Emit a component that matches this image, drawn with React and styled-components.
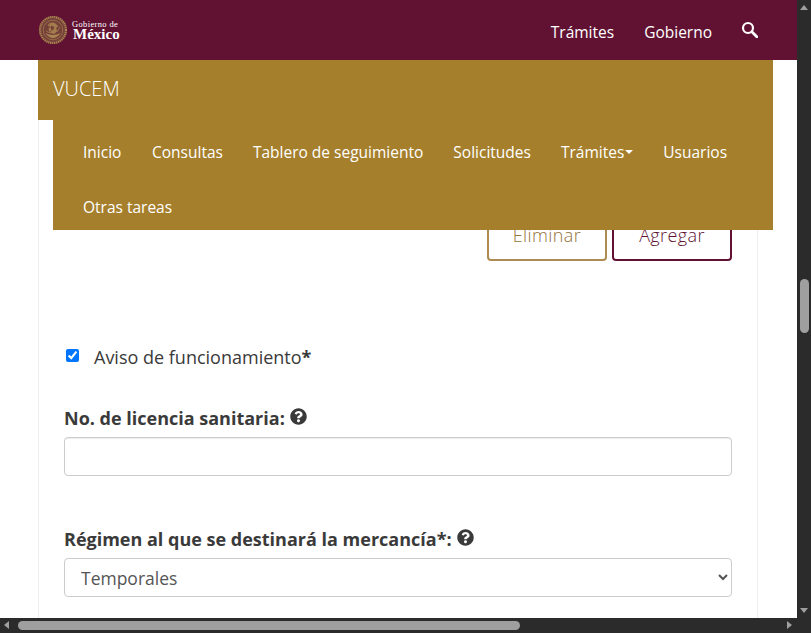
import React from "react";
import styled, { createGlobalStyle } from "styled-components";
import { FaQuestionCircle } from "react-icons/fa";

const GlobalStyle = createGlobalStyle`
  html, body {
    margin: 0;
    height: 100%;
    overflow: hidden;
    background: #fff;
  }
  * { box-sizing: border-box; }
`;

const Frame = styled.div`
  width: 811px;
  height: 633px;
  display: grid;
  grid-template-columns: 797px 14px;
  grid-template-rows: 618px 15px;
  font-family: "Open Sans", sans-serif;
  color: #3a3a3a;
`;

const Viewport = styled.div`
  position: relative;
  overflow: hidden;
  background: #fff;
`;

const TopBar = styled.header`
  height: 60px;
  background: #611232;
  display: flex;
  align-items: center;
  justify-content: space-between;
  padding: 0 38px;
`;

const Logo = styled.div`
  display: flex;
  align-items: center;
  gap: 4px;
  color: #fff;
  font-family: "Liberation Serif", serif;
`;

const LogoText = styled.div`
  display: flex;
  flex-direction: column;
  margin-top: -1px;
`;

const LogoSmall = styled.span`
  font-size: 8.5px;
  line-height: 9px;
  letter-spacing: 0.35px;
`;

const LogoBig = styled.span`
  font-size: 15px;
  line-height: 11px;
  font-weight: 700;
  padding-left: 1px;
`;

const TopLinks = styled.nav`
  display: flex;
  align-items: center;
  gap: 30px;
  padding: 4px 1px 0 0;
`;

const TopLink = styled.a`
  font-size: 15.5px;
  color: #fff;
`;

const SearchIcon = styled.svg`
  width: 17px;
  height: 17px;
  margin: 0 0 5px -1px;
`;

const MenuOverlay = styled.div`
  position: absolute;
  top: 60px;
  left: 38px;
  width: 735px;
  color: #fff;
`;

const Brand = styled.div`
  height: 60px;
  background: #a57f2c;
  padding: 0 15px 3px;
  display: flex;
  align-items: center;
  font-size: 20px;
  font-weight: 300;
`;

const MenuList = styled.ul`
  list-style: none;
  margin: 0 0 0 15px;
  padding: 4px 30px 0;
  height: 110px;
  background: #a57f2c;
  display: flex;
  flex-wrap: wrap;
  align-content: flex-start;
  column-gap: 30px;
`;

const MenuItem = styled.li`
  height: 55px;
  min-width: 39px;
  display: flex;
  align-items: center;
  font-size: 15.5px;
`;

const Caret = styled.span`
  display: inline-block;
  margin-left: 1px;
  border-top: 4px solid #fff;
  border-left: 4px solid transparent;
  border-right: 4px solid transparent;
`;

const Panel = styled.main`
  margin: 0 39px 0 38px;
  padding: 151px 25px 0;
  border-left: 1px solid #eee;
  border-right: 1px solid #eee;
  height: 558px;
`;

const ButtonRow = styled.div`
  display: flex;
  justify-content: flex-end;
  gap: 5px;
  margin-bottom: 83px;
`;

const ActionButton = styled.button`
  width: 120px;
  height: 50px;
  padding: 0 0 2px;
  background: #fff;
  border: 2px solid ${(p) => (p.$primary ? "#611232" : "#ae8b52")};
  border-radius: 4px;
  font-family: "Open Sans", sans-serif;
  font-weight: 300;
  font-size: 18px;
  letter-spacing: 0.4px;
  color: ${(p) => (p.$primary ? "#611232" : "#94733a")};
`;

const CheckRow = styled.label`
  display: flex;
  align-items: center;
  height: 26px;
  font-size: 18px;
  margin-bottom: 35px;
`;

const Check = styled.input`
  width: 13px;
  height: 13px;
  margin: 0 15px 4px 2px;
  accent-color: #0075ff;
`;

const Required = styled.b`
  font-weight: 700;
`;

const FieldLabel = styled.div`
  display: flex;
  align-items: center;
  gap: 5px;
  height: 24px;
  padding-top: 2px;
  font-size: 18px;
  font-weight: 700;
  margin-bottom: 8px;
  svg {
    width: 17px;
    height: 17px;
    margin-bottom: 4px;
  }
`;

const TextField = styled.input`
  display: block;
  width: 100%;
  height: 39px;
  border: 1px solid #ccc;
  border-radius: 4px;
  box-shadow: inset 0 1px 1px rgba(0, 0, 0, 0.075);
  margin-bottom: 50px;
`;

const SelectField = styled.select`
  display: block;
  width: 100%;
  height: 39px;
  background: #fff;
  border: 1px solid #ccc;
  border-radius: 4px;
  padding: 0 0 0 12px;
  font-family: "Open Sans", sans-serif;
  font-size: 17.5px;
  color: #555;
  margin-bottom: 15px;
`;

const ScrollTrack = styled.div`
  position: relative;
  background: #2b2b2b;
`;

const Arrow = styled.span`
  position: absolute;
  width: 0;
  height: 0;
  ${(p) => p.$pos}
`;

const ThumbV = styled.div`
  position: absolute;
  left: 3px;
  top: 279px;
  width: 9px;
  height: 54px;
  border-radius: 5px;
  background: #9f9f9f;
`;

const ThumbH = styled.div`
  position: absolute;
  left: 18px;
  top: 3px;
  width: 502px;
  height: 9px;
  border-radius: 5px;
  background: #9f9f9f;
`;

function Emblem() {
  return (
    <svg width="30" height="30" viewBox="0 0 30 30">
      <circle cx="15" cy="15" r="14" fill="#76403a" />
      <circle cx="15" cy="15" r="13" fill="none" stroke="#a98350" strokeWidth="2.2" strokeDasharray="1.2 0.8" />
      <circle cx="15" cy="15" r="9.8" fill="none" stroke="#9d7548" strokeWidth="0.8" />
      <path d="M7.5 18c2 3.4 5 5.2 7.5 5.2s5.5-1.8 7.5-5.2c-2.2 1.3-4.6 2-7.5 2s-5.3-.7-7.5-2z" fill="#a98350" />
      <path d="M9.5 10c2.4-2.6 5.6-3 8-1.6l3 3-2.2.8 1 3.8-3 3-4-1-2-4 1.8-2z" fill="#a47d4c" />
      <path d="M13 11l3 1-1 3-2-1zM10.5 8l1 2M18 14l3 1M12 17l2-2" stroke="#76403a" strokeWidth="0.7" fill="#76403a" />
      <path d="M8 16l4 2M22 12l-3 5" stroke="#9a7248" strokeWidth="1" />
    </svg>
  );
}

export default function App() {
  return (
    <Frame>
      <GlobalStyle />
      <Viewport>
        <TopBar>
          <Logo>
            <Emblem />
            <LogoText>
              <LogoSmall>Gobierno de</LogoSmall>
              <LogoBig>México</LogoBig>
            </LogoText>
          </Logo>
          <TopLinks>
            <TopLink>Trámites</TopLink>
            <TopLink>Gobierno</TopLink>
            <SearchIcon viewBox="0 0 17 17">
              <circle cx="7" cy="7" r="5" fill="none" stroke="#fff" strokeWidth="2.2" />
              <path d="M10.8 10.8l5 5" stroke="#fff" strokeWidth="2.8" strokeLinecap="round" />
            </SearchIcon>
          </TopLinks>
        </TopBar>

        <Panel>
          <ButtonRow>
            <ActionButton>Eliminar</ActionButton>
            <ActionButton $primary>Agregar</ActionButton>
          </ButtonRow>
          <CheckRow>
            <Check type="checkbox" defaultChecked />
            <span>
              Aviso de funcionamiento<Required>*</Required>
            </span>
          </CheckRow>
          <FieldLabel>
            No. de licencia sanitaria: <FaQuestionCircle />
          </FieldLabel>
          <TextField type="text" />
          <FieldLabel>
            Régimen al que se destinará la mercancía*: <FaQuestionCircle />
          </FieldLabel>
          <SelectField defaultValue="temporales">
            <option value="temporales">Temporales</option>
          </SelectField>
          <FieldLabel>Aduana*:</FieldLabel>
        </Panel>

        <MenuOverlay>
          <Brand>VUCEM</Brand>
          <MenuList>
            <MenuItem>Inicio</MenuItem>
            <MenuItem>Consultas</MenuItem>
            <MenuItem>Tablero de seguimiento</MenuItem>
            <MenuItem>Solicitudes</MenuItem>
            <MenuItem>
              Trámites
              <Caret />
            </MenuItem>
            <MenuItem>Usuarios</MenuItem>
            <MenuItem>Otras tareas</MenuItem>
          </MenuList>
        </MenuOverlay>
      </Viewport>

      <ScrollTrack>
        <Arrow $pos="top:5px;left:3px;border-left:4px solid transparent;border-right:4px solid transparent;border-bottom:5px solid #9f9f9f;" />
        <ThumbV />
        <Arrow $pos="bottom:5px;left:3px;border-left:4px solid transparent;border-right:4px solid transparent;border-top:5px solid #9f9f9f;" />
      </ScrollTrack>
      <ScrollTrack>
        <Arrow $pos="top:3px;left:4px;border-top:4px solid transparent;border-bottom:4px solid transparent;border-right:5px solid #9f9f9f;" />
        <ThumbH />
        <Arrow $pos="top:3px;right:5px;border-top:4px solid transparent;border-bottom:4px solid transparent;border-left:5px solid #9f9f9f;" />
      </ScrollTrack>
      <ScrollTrack />
    </Frame>
  );
}
